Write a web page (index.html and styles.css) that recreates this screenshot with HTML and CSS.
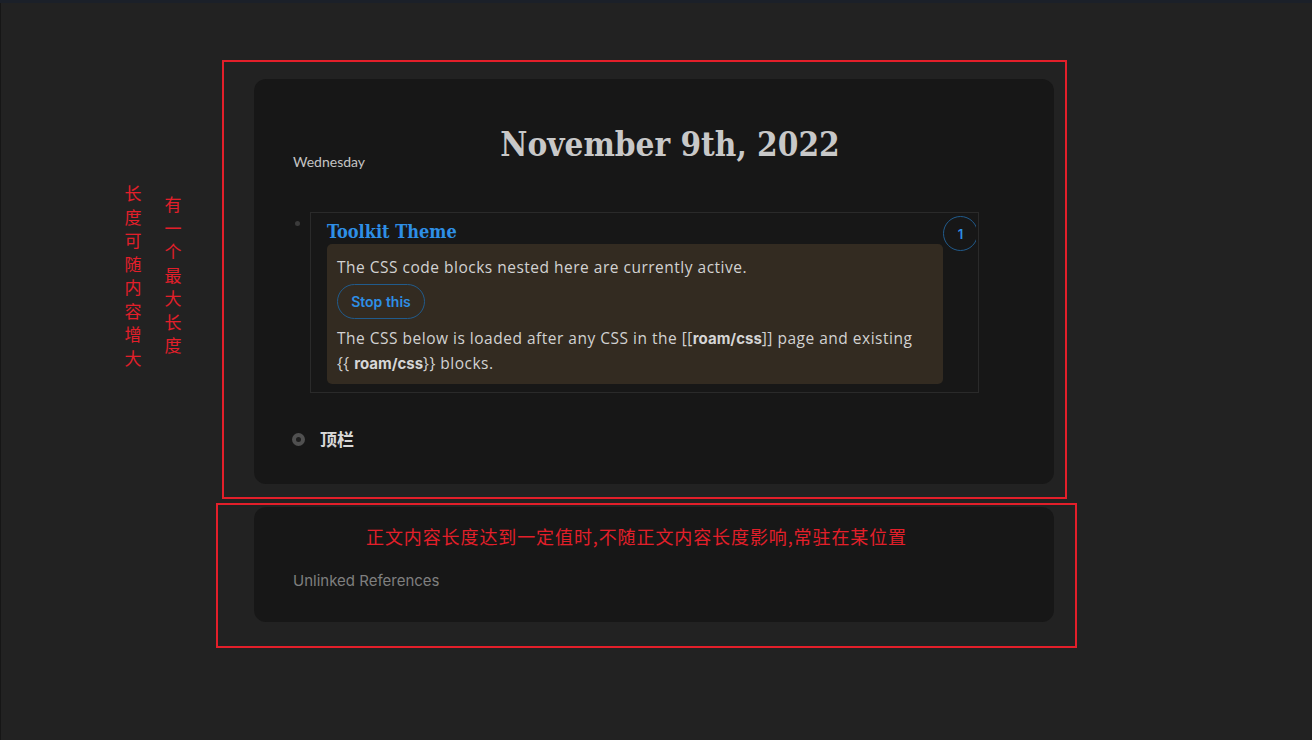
FILE: index.html
```html
<!DOCTYPE html>
<html lang="zh">
<head>
<meta charset="utf-8">
<title>November 9th, 2022</title>
<link rel="stylesheet" href="styles.css">
</head>
<body>
<div class="topbar"></div>
<div class="app">
  <main class="main">
    <section class="card page">
      <header class="page-header">
        <div class="weekday">Wednesday</div>
        <h1 class="page-title">November 9th, 2022</h1>
      </header>

      <div class="block-row">
        <div class="bullet-col"><span class="dot"></span></div>
        <div class="block-box">
          <div class="block-main">
            <div class="block-title">Toolkit Theme</div>
            <div class="notice">
              <p class="notice-line">The CSS code blocks nested here are currently active.</p>
              <button class="stop-btn">Stop this</button>
              <p class="notice-line">The CSS below is loaded after any CSS in the [[<b class="code">roam/css</b>]] page and existing {{ <b class="code">roam/css</b>}} blocks.</p>
            </div>
          </div>
          <div class="badge-clip"><span class="badge">1</span></div>
        </div>
      </div>

      <div class="item-row">
        <div class="bullet-col wide"><span class="ring"></span></div>
        <div class="item-text">顶栏</div>
      </div>
    </section>

    <section class="card refs">
      <div class="refs-title">Unlinked References</div>
    </section>
  </main>
</div>

<div class="annotations">
  <div class="note-box box-a"></div>
  <div class="note-box box-b"></div>
  <div class="note-col col-a">长度可随内容增大</div>
  <div class="note-col col-b">有一个最大长度</div>
  <div class="note-line">正文内容长度达到一定值时,不随正文内容长度影响,常驻在某位置</div>
</div>
</body>
</html>
```

FILE: styles.css
```css
html, body {
  margin: 0;
  padding: 0;
}

body {
  width: 1312px;
  height: 740px;
  overflow: hidden;
  background: #222222;
  position: relative;
  font-family: "Open Sans", "Noto Sans", sans-serif;
}

.topbar {
  height: 3px;
  background: #1b2029;
}

.app {
  height: 737px;
  border-left: 1px solid #161616;
  display: flex;
}

.main {
  flex: 1;
  display: flex;
  flex-direction: column;
  align-items: center;
  padding-top: 76px;
  padding-right: 5px;
  gap: 23px;
}

.card {
  width: 800px;
  box-sizing: border-box;
  background: #171717;
  border-radius: 12px;
}

.page {
  padding: 46px 75px 33px 39px;
}

.page-header {
  display: flex;
  align-items: flex-end;
}

.weekday {
  font-family: "Lato", sans-serif;
  font-size: 14px;
  line-height: 18px;
  color: #c4c4c4;
  margin-bottom: -6px;
}

.page-title {
  flex: 1;
  margin: 0;
  text-align: center;
  font-family: "DejaVu Serif", serif;
  font-stretch: condensed;
  font-weight: 700;
  font-size: 33px;
  line-height: 40px;
  color: #c8c8c8;
  padding-right: 4px;
}

.block-row {
  display: flex;
  margin-top: 47px;
}

.bullet-col {
  width: 17px;
  flex: none;
}

.dot {
  display: block;
  width: 5px;
  height: 5px;
  border-radius: 50%;
  background: #3b3b3b;
  margin: 9px 0 0 2px;
}

.block-box {
  flex: 1;
  display: flex;
  border: 1px solid #2a2a2a;
  padding: 6px 2px 8px 16px;
}

.block-main {
  flex: 1;
}

.block-title {
  font-family: "DejaVu Serif", serif;
  font-stretch: condensed;
  font-weight: 700;
  font-size: 18px;
  line-height: 25px;
  color: #2e8fe6;
}

.notice {
  background: #332b21;
  border-radius: 5px;
  padding: 11px 16px 8px 10px;
}

.notice-line {
  margin: 0;
  font-family: "Open Sans", sans-serif;
  font-size: 15.5px;
  line-height: 24px;
  letter-spacing: 0.5px;
  color: #d2d2d2;
}

.code {
  font-family: "Inter", sans-serif;
  font-weight: 700;
  font-size: 15px;
  letter-spacing: 0;
  color: #d6d6d6;
}

.stop-btn {
  display: block;
  margin: 5px 0 7px;
  height: 35px;
  width: 88px;
  border: 1px solid #215b8c;
  border-radius: 18px;
  background: transparent;
  font-family: "Inter", sans-serif;
  font-weight: 600;
  font-size: 14px;
  color: #2e8fe6;
  padding: 0;
}

.badge-clip {
  width: 33px;
  height: 36px;
  margin-top: -3px;
  overflow: hidden;
  flex: none;
}

.badge {
  display: flex;
  align-items: center;
  justify-content: center;
  box-sizing: border-box;
  width: 35px;
  height: 35px;
  border: 1px solid #215b8c;
  border-radius: 50%;
  font-family: "Inter", sans-serif;
  font-weight: 600;
  font-size: 13px;
  color: #2e8fe6;
}

.item-row {
  display: flex;
  align-items: center;
  margin-top: 34px;
}

.bullet-col.wide {
  width: 27px;
}

.ring {
  display: block;
  width: 5px;
  height: 5px;
  border-radius: 50%;
  border: 4px solid #505050;
  background: #1e1e1e;
  margin-left: -1px;
}

.item-text {
  font-family: "Noto Sans CJK SC", sans-serif;
  font-weight: 700;
  font-size: 17px;
  line-height: 24px;
  color: #d8d8d8;
}

.refs {
  padding: 64px 39px 31px;
}

.refs-title {
  font-family: "Inter", sans-serif;
  font-size: 15px;
  line-height: 20px;
  color: #7f7f7f;
}

/* annotation overlay */
.annotations {
  position: absolute;
  left: 0;
  top: 0;
  width: 1312px;
  height: 740px;
  pointer-events: none;
}

.note-box {
  position: absolute;
  border: 2px solid #e31f2a;
  box-sizing: border-box;
}

.box-a {
  left: 222px;
  top: 60px;
  width: 845px;
  height: 439px;
}

.box-b {
  left: 216px;
  top: 503px;
  width: 861px;
  height: 145px;
}

.note-col {
  position: absolute;
  width: 18px;
  font-family: "Noto Sans CJK SC", sans-serif;
  font-size: 17px;
  line-height: 23.5px;
  color: #e31f2a;
  text-align: center;
}

.col-a {
  left: 124px;
  top: 181px;
}

.col-b {
  left: 164px;
  top: 192px;
}

.note-line {
  position: absolute;
  left: 366px;
  top: 525px;
  font-family: "Noto Sans CJK SC", sans-serif;
  font-size: 18px;
  line-height: 22px;
  letter-spacing: 0.9px;
  color: #e31f2a;
  white-space: nowrap;
}
```
